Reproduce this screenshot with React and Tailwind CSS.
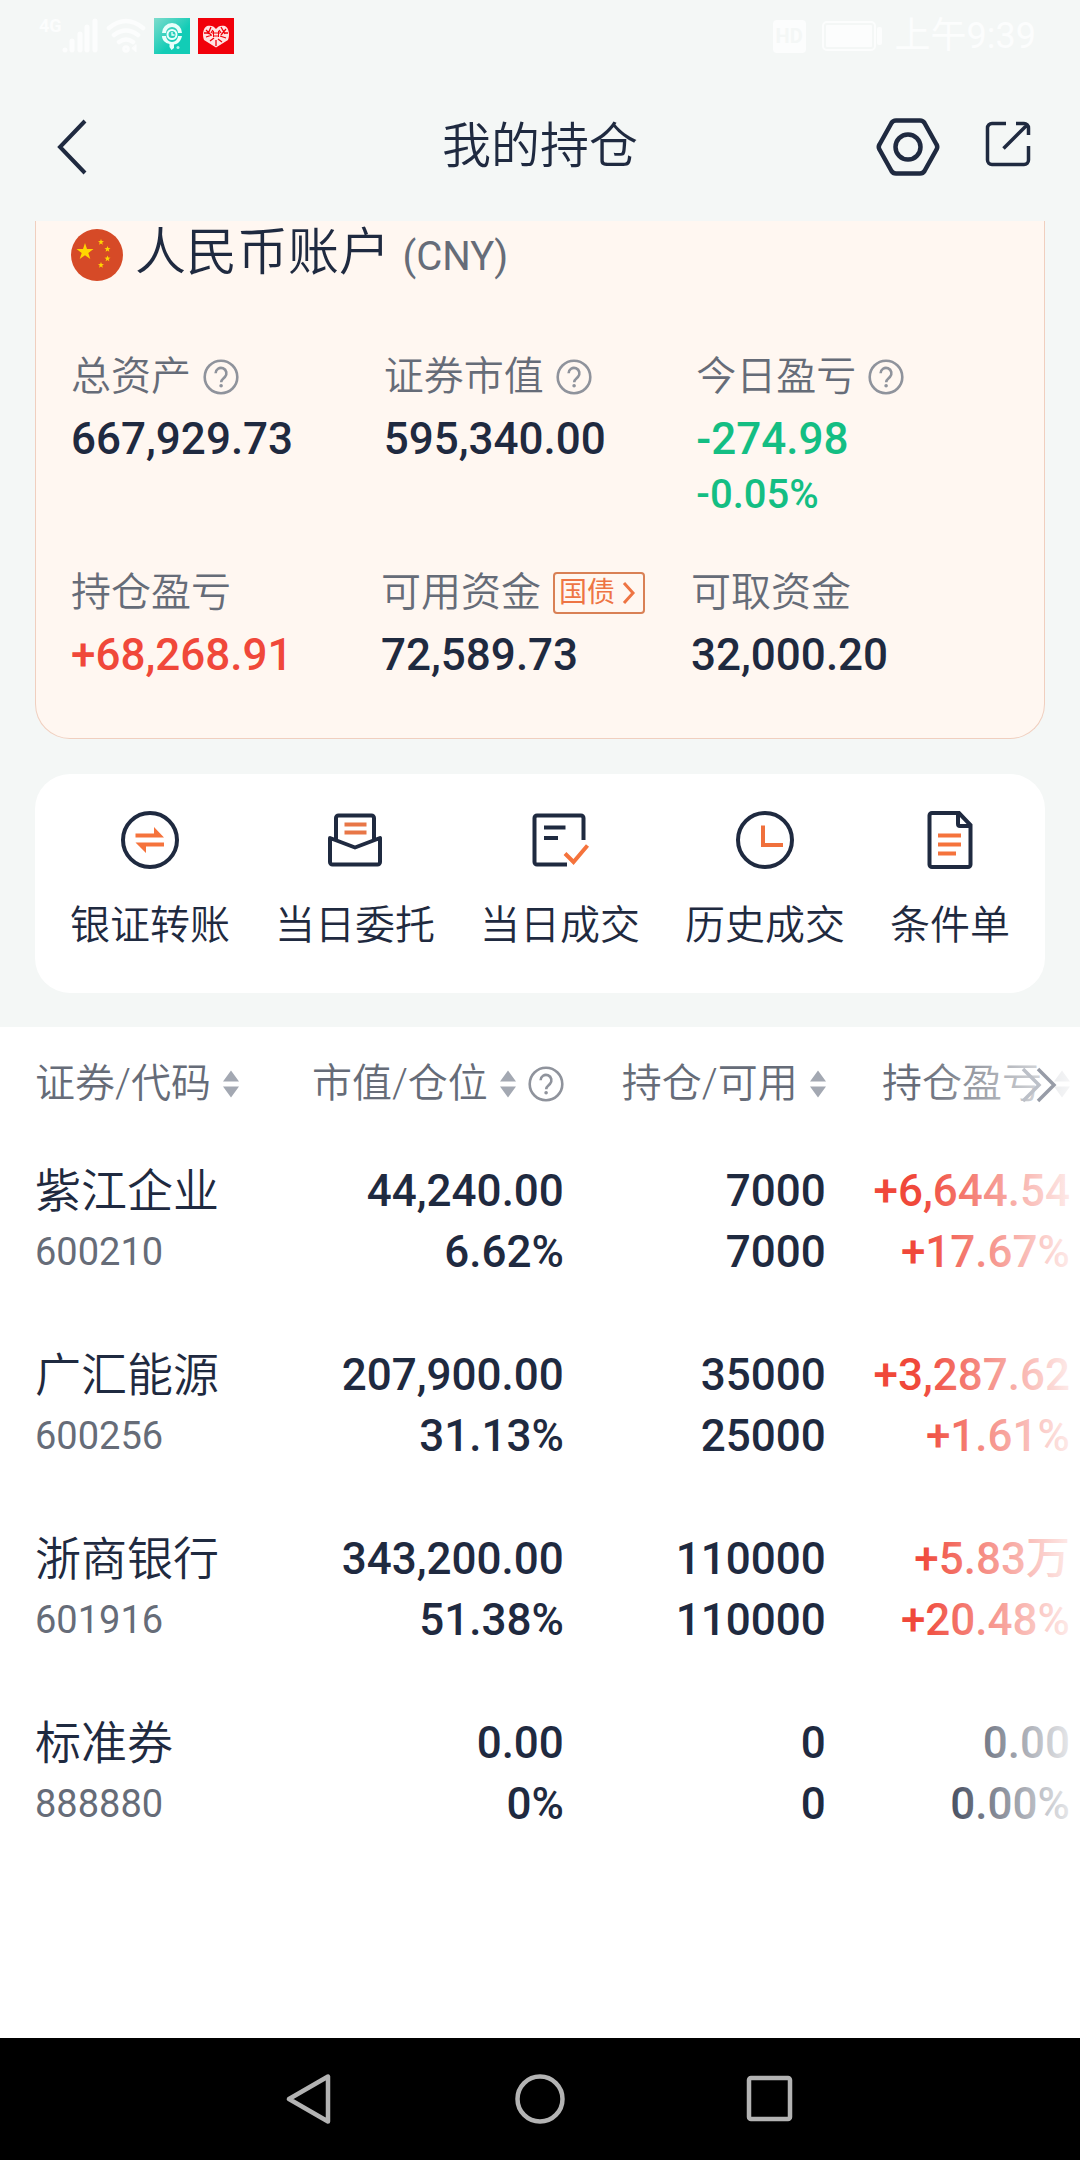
import { useState } from 'react'

const SUMMARY_TOP = [
  { label: '总资产', value: '667,929.73', help: true },
  { label: '证券市值', value: '595,340.00', help: true },
  { label: '今日盈亏', value: '-274.98', sub: '-0.05%', help: true, color: 'text-[#14be83]' },
]

const SUMMARY_BOTTOM = [
  { label: '持仓盈亏', value: '+68,268.91', color: 'text-[#f0483a]' },
  { label: '可用资金', value: '72,589.73', bond: true },
  { label: '可取资金', value: '32,000.20' },
]

const HOLDINGS = [
  { name: '紫江企业', code: '600210', market: '44,240.00', ratio: '6.62%', held: '7000', usable: '7000', profit: '+6,644.54', rate: '+17.67%', up: true },
  { name: '广汇能源', code: '600256', market: '207,900.00', ratio: '31.13%', held: '35000', usable: '25000', profit: '+3,287.62', rate: '+1.61%', up: true },
  { name: '浙商银行', code: '601916', market: '343,200.00', ratio: '51.38%', held: '110000', usable: '110000', profit: '+5.83万', rate: '+20.48%', up: true },
  { name: '标准券', code: '888880', market: '0.00', ratio: '0%', held: '0', usable: '0', profit: '0.00', rate: '0.00%', up: false },
]

const COLUMNS = [
  { key: 'code', label: '证券/代码', width: 'w-[22.1%]', align: 'justify-start' },
  { key: 'market', label: '市值/仓位', width: 'w-[29%]', align: 'justify-end', help: true },
  { key: 'held', label: '持仓/可用', width: 'w-[25.3%]', align: 'justify-end' },
  { key: 'profit', label: '持仓盈亏', width: 'w-[23.6%]', align: 'justify-end' },
]

function HelpIcon() {
  return (
    <svg className="w-9 h-9 shrink-0" viewBox="0 0 36 36" fill="none" stroke="#8f939c" strokeWidth="2.6">
      <circle cx="18" cy="18" r="16.3" />
      <path d="M12.6 14.2a5.4 5.4 0 1 1 9.3 3.8c-1.8 1.8-3.7 2.6-3.7 5.2" />
      <circle cx="18.1" cy="26.8" r="1" fill="#8f939c" strokeWidth="1.6" />
    </svg>
  )
}

function SortIcon() {
  return (
    <svg className="w-4 h-7 shrink-0" viewBox="0 0 16 28" fill="#a3a8b2">
      <path d="M8 0.5 16 11.5H0zM8 27.5 16 16.5H0z" />
    </svg>
  )
}

function ActionIcon({ children }) {
  return (
    <svg className="w-[60px] h-[60px]" viewBox="0 0 60 60" fill="none" stroke="#1f2a40" strokeWidth="4">
      {children}
    </svg>
  )
}

const ACTIONS = [
  {
    label: '银证转账',
    icon: (
      <>
        <circle cx="30" cy="30" r="27" />
        <path d="M15.5 23.5H34V17l10 10.5H15.5zM44 32.5H15.5L26 43v-6.5h18z" fill="#f5733c" stroke="none" />
      </>
    ),
  },
  {
    label: '当日委托',
    icon: (
      <>
        <path d="M11 30V8a2.5 2.5 0 0 1 2.5-2.5h33A2.5 2.5 0 0 1 49 8v22" />
        <path d="M5 28l25 9.5L55 28v24a2.5 2.5 0 0 1-2.5 2.5h-45A2.5 2.5 0 0 1 5 52z" strokeLinejoin="round" />
        <path d="M19.5 14.5h22M19.5 22.5h22" stroke="#e87647" />
      </>
    ),
  },
  {
    label: '当日成交',
    icon: (
      <>
        <path d="M53.5 30V8A2.5 2.5 0 0 0 51 5.5H7A2.5 2.5 0 0 0 4.5 8v44A2.5 2.5 0 0 0 7 54.5h30" />
        <path d="M14 17.5h21.5M14 28h14" />
        <path d="M35 43.5l8.5 8.5L57.5 35.5" stroke="#f5733c" />
      </>
    ),
  },
  {
    label: '历史成交',
    icon: (
      <>
        <circle cx="30" cy="30" r="27" />
        <path d="M28 15.5v19.5h20" stroke="#f0703c" />
      </>
    ),
  },
  {
    label: '条件单',
    icon: (
      <>
        <path d="M39 3H12a2.5 2.5 0 0 0-2.5 2.5v49A2.5 2.5 0 0 0 12 57h36a2.5 2.5 0 0 0 2.5-2.5V15z" />
        <path d="M38 3v11a2 2 0 0 0 2 2h11" />
        <path d="M18 25.5h23M18 34.5h23M18 43.5h18" stroke="#f5733c" />
      </>
    ),
  },
]

function StatusBar() {
  return (
    <div className="h-18 pl-[39px] pr-11 flex items-center justify-between text-[#fcfdfd]">
      <div className="flex items-center">
        <span className="text-[18px] leading-4 font-bold self-start">4G</span>
        <svg className="w-9 h-9 shrink-0" viewBox="0 0 36 36" fill="none" stroke="currentColor" strokeWidth="5" strokeLinecap="round">
          <path d="M3 32v.1M10 32V23M18 32V16M25 32V9M33 32V3" />
        </svg>
        <svg className="ml-2 w-10 h-9 shrink-0" viewBox="0 0 40 36" fill="none" stroke="currentColor" strokeWidth="4.5" strokeLinecap="round">
          <path d="M3 10q17-14 34 0M8 17q12-9 24 0M13 24q7-5 14 0" />
          <circle cx="20" cy="31" r="1.5" />
          <path d="M30 27v7l-4-3.5z" fill="currentColor" strokeWidth="1" />
        </svg>
        <svg className="ml-2 w-9 h-9 shrink-0" viewBox="0 0 36 36">
          <defs>
            <linearGradient id="appTeal" x1="0" y1="0" x2="1" y2="1">
              <stop offset="0" stopColor="#7fdccd" />
              <stop offset="0.6" stopColor="#12ccb6" />
            </linearGradient>
          </defs>
          <rect width="36" height="36" fill="url(#appTeal)" />
          <path d="M8 15a10 10 0 0 1 20 0h-4a6 6 0 0 0-12 0zM8 18h4a6 6 0 0 0 12 0h4c-1 5-4 8-8 8.5V30l-2.5 2-2-3v-3C11 25 8 22 8 18z" fill="#e9fffb" />
          <circle cx="18" cy="16.5" r="4.5" fill="none" stroke="#e9fffb" strokeWidth="2" />
          <path d="M18 14v3h2.5" fill="none" stroke="#e9fffb" strokeWidth="1.3" />
          <circle cx="24" cy="29.5" r="1.5" fill="#b5f4ea" />
        </svg>
        <svg className="ml-2 w-9 h-9 shrink-0" viewBox="0 0 36 36">
          <rect width="36" height="36" fill="#f1000a" />
          <path d="M18 29.5L6 22c-2-5-1-12 3-14 4-1 7 0 9 3 2-3 5-4 9-3 4 2 5 9 3 14z" fill="#ffe3e3" />
          <path d="M8 12l5 5M13 9l-3 7M23 9l4 7M28 11l-5 6M8 19l6-2M22 18l6 2M12 23l4-3M20 21l4 3M18 22v6M15 12l-2 3M21 12l2 3M6 15h4M26 15h4" fill="none" stroke="#f1000a" strokeWidth="1.3" />
          <path d="M15.5 13v6M20.5 13v6M14 15h8M15.5 18h5" fill="none" stroke="#f1000a" />
        </svg>
      </div>
      <div className="flex items-center gap-3">
        <span className="w-[33px] h-[33px] rounded-sm bg-[#fcfdfd] text-[#f4f7f6] text-[20px] leading-5 font-bold flex items-center justify-center">HD</span>
        <svg className="ml-1 w-[61px] h-[30px]" viewBox="0 0 61 30" fill="none" stroke="currentColor" strokeWidth="2">
          <rect x="1" y="1" width="52" height="28" rx="4" />
          <rect x="4" y="4" width="46" height="22" rx="1" fill="currentColor" stroke="none" />
          <rect x="55" y="6" width="5" height="18" rx="2" fill="currentColor" stroke="none" />
        </svg>
        <span className="text-[36px] leading-9 font-normal">上午9:39</span>
      </div>
    </div>
  )
}

function SummaryItem({ item }) {
  return (
    <div className="whitespace-nowrap">
      <dt className="flex items-center gap-3 text-[40px] leading-12 text-[#666c78]">
        {item.label}
        {item.help && <button aria-label={`${item.label}说明`}><HelpIcon /></button>}
        {item.bond && (
          <button className="h-[42px] px-1 flex items-center gap-1 border-2 border-[#d98055] rounded-sm text-[28px] leading-9 font-normal text-[#ee7443]">
            国债
            <svg className="w-5 h-6" viewBox="0 0 20 24" fill="none" stroke="currentColor" strokeWidth="3">
              <path d="M5 2l9 10-9 10" />
            </svg>
          </button>
        )}
      </dt>
      <dd className={`mt-2 font-medium ${item.color || 'text-[#1f2a40]'}`}>
        <div className="text-[44px] leading-[60px]">{item.value}</div>
        {item.sub && <div className="text-[40px] leading-[52px]">{item.sub}</div>}
      </dd>
    </div>
  )
}

export default function App() {
  const [sortKey, setSortKey] = useState(null)

  return (
    <div className="min-h-screen flex flex-col bg-[#f4f7f6] text-[#1f2a40] font-[350] font-['Roboto','Noto_Sans_CJK_SC',sans-serif]">
      <StatusBar />

      <header className="h-[149px] px-12 grid grid-cols-3 items-center">
        <button aria-label="返回" className="justify-self-start">
          <svg className="w-10 h-[60px]" viewBox="0 0 40 60" fill="none" stroke="#1f2a40" strokeWidth="4">
            <path d="M37 4L12 30l25 26" />
          </svg>
        </button>
        <h1 className="text-[49px] leading-[60px] text-center">我的持仓</h1>
        <div className="flex items-center justify-end gap-11">
          <button aria-label="设置">
            <svg className="w-16 h-[60px]" viewBox="0 0 64 60" fill="none" stroke="#1f2a40" strokeWidth="4.5" strokeLinejoin="round">
              <path d="M20 3.5h24q3 0 4.5 2.5l12 21.5q1.5 2.5 0 5l-12 21.5q-1.5 2.5-4.5 2.5H20q-3 0-4.5-2.5l-12-21.5q-1.5-2.5 0-5L15.5 6Q17 3.5 20 3.5z" />
              <circle cx="32" cy="30" r="12.5" />
            </svg>
          </button>
          <button aria-label="分享" className="pb-1.5">
            <svg className="w-12 h-12" viewBox="0 0 48 48" fill="none" stroke="#1f2a40" strokeWidth="3.5">
              <path d="M22 3.5H8A4.5 4.5 0 0 0 3.5 8v32A4.5 4.5 0 0 0 8 44.5h32a4.5 4.5 0 0 0 4.5-4.5V26" />
              <path d="M32 3.5h8A4.5 4.5 0 0 1 44.5 8v7M43 5L19.5 28.5" />
            </svg>
          </button>
        </div>
      </header>

      <main className="flex-1 flex flex-col">
        {/* 账户资产 */}
        <section className="mx-[35px] px-[35px] pb-[53px] bg-[#fff7f1] border border-t-0 border-[#f0cfbf] rounded-b-[35px]">
          <div className="flex items-center gap-3">
            <svg className="w-[52px] h-[52px]" viewBox="0 0 52 52" fill="#ffd600">
              <circle cx="26" cy="26" r="26" fill="#d64a27" />
              <path d="M14 14l2 6.1h6.5l-5.2 3.8 2 6.1-5.3-3.8-5.3 3.8 2-6.1-5.2-3.8H12z" />
              <path d="M30 10l.8 2.1 2.2.1-1.8 1.4.6 2.2-1.8-1.2-1.9 1.2.6-2.2-1.7-1.4 2.2-.1zM36.5 17l.8 2.1 2.2.1-1.8 1.4.6 2.2-1.8-1.2-1.9 1.2.6-2.2-1.7-1.4 2.2-.1zM36.5 26.5l.8 2.1 2.2.1-1.8 1.4.6 2.2-1.8-1.2-1.9 1.2.6-2.2-1.7-1.4 2.2-.1zM30 33l.8 2.1 2.2.1-1.8 1.4.6 2.2-1.8-1.2-1.9 1.2.6-2.2-1.7-1.4 2.2-.1z" />
            </svg>
            <h2 className="text-[51px] leading-16">
              人民币账户 <span className="text-[40px] font-normal text-[#666c78]">(CNY)</span>
            </h2>
          </div>
          <dl className="mt-16 grid grid-cols-3">
            {SUMMARY_TOP.map(item => <SummaryItem key={item.label} item={item} />)}
          </dl>
          <dl className="mt-12 pr-2 grid grid-cols-3">
            {SUMMARY_BOTTOM.map(item => <SummaryItem key={item.label} item={item} />)}
          </dl>
        </section>

        {/* 快捷入口 */}
        <nav className="mx-[35px] mt-[35px] mb-[34px] px-[35px] pt-9 pb-[43px] bg-white rounded-[35px] flex justify-between">
          {ACTIONS.map(action => (
            <a key={action.label} href="#" className="flex flex-col items-center gap-8 text-[40px] leading-12 whitespace-nowrap">
              <ActionIcon>{action.icon}</ActionIcon>
              {action.label}
            </a>
          ))}
        </nav>

        {/* 持仓列表 */}
        <section className="relative flex-1 pl-[35px] pr-2.5 bg-white overflow-hidden">
          <table className="w-full table-fixed whitespace-nowrap">
            <thead>
              <tr className="text-[40px] leading-12 text-[#666c78]">
                {COLUMNS.map(col => (
                  <th key={col.key} scope="col" className={`pt-[33px] pb-[22px] font-[350] ${col.width}`}>
                    <div className={`flex items-center gap-3 ${col.align}`}>
                      <button
                        onClick={() => setSortKey(sortKey === col.key ? null : col.key)}
                        className="flex items-center gap-3"
                      >
                        {col.label}
                        <SortIcon />
                      </button>
                      {col.help && <button aria-label="仓位说明"><HelpIcon /></button>}
                    </div>
                  </th>
                ))}
              </tr>
            </thead>
            <tbody>
              {HOLDINGS.map(h => (
                <tr key={h.code} className="text-[44px] leading-[61px] font-medium text-right">
                  <th scope="row" className="py-[31px] text-left font-[350]">
                    <div className="text-[46px]">{h.name}</div>
                    <div className="text-[38px] font-normal text-[#666c78]">{h.code}</div>
                  </th>
                  <td>
                    <div>{h.market}</div>
                    <div>{h.ratio}</div>
                  </td>
                  <td>
                    <div>{h.held}</div>
                    <div>{h.usable}</div>
                  </td>
                  <td className={h.up ? 'text-[#f0483a]' : ''}>
                    <div>{h.profit}</div>
                    <div>{h.rate}</div>
                  </td>
                </tr>
              ))}
            </tbody>
          </table>
          <div className="absolute inset-y-0 right-0 w-40 bg-linear-to-l from-white/95 to-white/0 pointer-events-none" />
          <button aria-label="查看更多列" className="absolute right-5 top-10">
            <svg className="w-10 h-9" viewBox="0 0 40 36" fill="none" stroke="#979ca7" strokeWidth="3.5">
              <path d="M3 2l16 16L3 34" stroke="#bcc0c8" />
              <path d="M18 2l16 16-16 16" />
            </svg>
          </button>
        </section>
      </main>

      <footer className="h-[122px] bg-black flex items-center justify-center gap-[180px]">
        <button aria-label="后退">
          <svg className="w-[50px] h-[50px]" viewBox="0 0 50 50" fill="none" stroke="#b3b3b3" strokeWidth="4.5" strokeLinejoin="round">
            <path d="M43 2.5v45L4 25z" />
          </svg>
        </button>
        <button aria-label="主屏幕">
          <svg className="w-[50px] h-[50px]" viewBox="0 0 50 50" fill="none" stroke="#b3b3b3" strokeWidth="4.5">
            <circle cx="25" cy="25" r="22.5" />
          </svg>
        </button>
        <button aria-label="最近任务">
          <svg className="w-[50px] h-[50px]" viewBox="0 0 50 50" fill="none" stroke="#b3b3b3" strokeWidth="4.5">
            <rect x="4" y="4" width="41" height="41" rx="2" />
          </svg>
        </button>
      </footer>
    </div>
  )
}
